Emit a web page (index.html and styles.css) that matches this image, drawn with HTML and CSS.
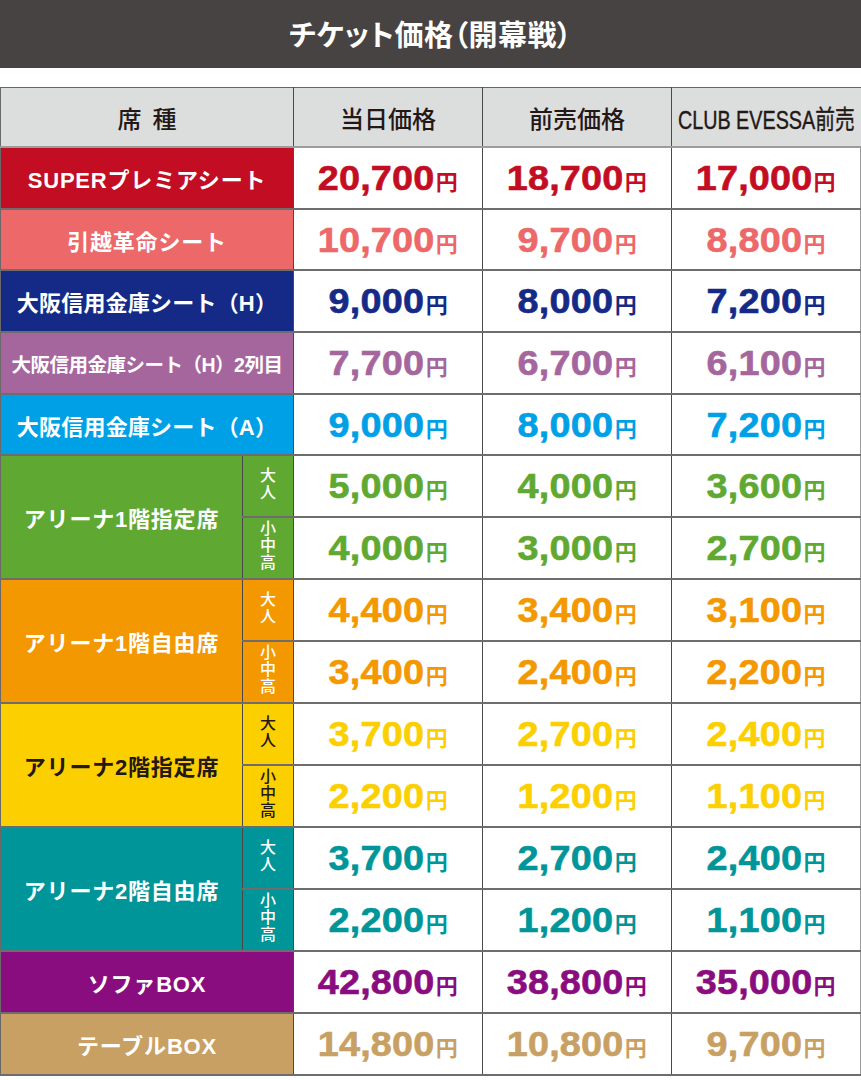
FILE: index.html
```html
<!DOCTYPE html>
<html lang="ja">
<head>
<meta charset="utf-8">
<title>チケット価格（開幕戦）</title>
<link rel="stylesheet" href="styles.css">
</head>
<body>
<div class="titlebar">チケット価格（開幕戦）</div>
<table class="prices">
  <colgroup>
    <col class="c-label"><col class="c-sub"><col class="c-p"><col class="c-p"><col class="c-p3">
  </colgroup>
  <thead>
    <tr>
      <th colspan="2">席&nbsp;&nbsp;種</th>
      <th>当日価格</th>
      <th>前売価格</th>
      <th class="club"><span>CLUB EVESSA前売</span></th>
    </tr>
  </thead>
  <tbody>
    <tr class="r-super">
      <td colspan="2" class="lbl">SUPERプレミアシート</td>
      <td class="p"><b>20,700</b><small>円</small></td><td class="p"><b>18,700</b><small>円</small></td><td class="p"><b>17,000</b><small>円</small></td>
    </tr>
    <tr class="r-hikkoshi short">
      <td colspan="2" class="lbl">引越革命シート</td>
      <td class="p"><b>10,700</b><small>円</small></td><td class="p"><b>9,700</b><small>円</small></td><td class="p"><b>8,800</b><small>円</small></td>
    </tr>
    <tr class="r-osakah">
      <td colspan="2" class="lbl tight">大阪信用金庫シート（H）</td>
      <td class="p"><b>9,000</b><small>円</small></td><td class="p"><b>8,000</b><small>円</small></td><td class="p"><b>7,200</b><small>円</small></td>
    </tr>
    <tr class="r-osakah2">
      <td colspan="2" class="lbl narrow">大阪信用金庫シート（H）2列目</td>
      <td class="p"><b>7,700</b><small>円</small></td><td class="p"><b>6,700</b><small>円</small></td><td class="p"><b>6,100</b><small>円</small></td>
    </tr>
    <tr class="r-osakaa short">
      <td colspan="2" class="lbl tight">大阪信用金庫シート（A）</td>
      <td class="p"><b>9,000</b><small>円</small></td><td class="p"><b>8,000</b><small>円</small></td><td class="p"><b>7,200</b><small>円</small></td>
    </tr>

    <tr class="r-a1s">
      <td rowspan="2" class="lbl">アリーナ1階指定席</td>
      <td class="sub"><span>大人</span></td>
      <td class="p"><b>5,000</b><small>円</small></td><td class="p"><b>4,000</b><small>円</small></td><td class="p"><b>3,600</b><small>円</small></td>
    </tr>
    <tr class="r-a1s">
      <td class="sub"><span>小中高</span></td>
      <td class="p"><b>4,000</b><small>円</small></td><td class="p"><b>3,000</b><small>円</small></td><td class="p"><b>2,700</b><small>円</small></td>
    </tr>

    <tr class="r-a1j">
      <td rowspan="2" class="lbl">アリーナ1階自由席</td>
      <td class="sub"><span>大人</span></td>
      <td class="p"><b>4,400</b><small>円</small></td><td class="p"><b>3,400</b><small>円</small></td><td class="p"><b>3,100</b><small>円</small></td>
    </tr>
    <tr class="r-a1j">
      <td class="sub"><span>小中高</span></td>
      <td class="p"><b>3,400</b><small>円</small></td><td class="p"><b>2,400</b><small>円</small></td><td class="p"><b>2,200</b><small>円</small></td>
    </tr>

    <tr class="r-a2s">
      <td rowspan="2" class="lbl">アリーナ2階指定席</td>
      <td class="sub"><span>大人</span></td>
      <td class="p"><b>3,700</b><small>円</small></td><td class="p"><b>2,700</b><small>円</small></td><td class="p"><b>2,400</b><small>円</small></td>
    </tr>
    <tr class="r-a2s">
      <td class="sub"><span>小中高</span></td>
      <td class="p"><b>2,200</b><small>円</small></td><td class="p"><b>1,200</b><small>円</small></td><td class="p"><b>1,100</b><small>円</small></td>
    </tr>

    <tr class="r-a2j">
      <td rowspan="2" class="lbl">アリーナ2階自由席</td>
      <td class="sub"><span>大人</span></td>
      <td class="p"><b>3,700</b><small>円</small></td><td class="p"><b>2,700</b><small>円</small></td><td class="p"><b>2,400</b><small>円</small></td>
    </tr>
    <tr class="r-a2j">
      <td class="sub"><span>小中高</span></td>
      <td class="p"><b>2,200</b><small>円</small></td><td class="p"><b>1,200</b><small>円</small></td><td class="p"><b>1,100</b><small>円</small></td>
    </tr>

    <tr class="r-sofa">
      <td colspan="2" class="lbl">ソファBOX</td>
      <td class="p"><b>42,800</b><small>円</small></td><td class="p"><b>38,800</b><small>円</small></td><td class="p"><b>35,000</b><small>円</small></td>
    </tr>
    <tr class="r-table">
      <td colspan="2" class="lbl">テーブルBOX</td>
      <td class="p"><b>14,800</b><small>円</small></td><td class="p"><b>10,800</b><small>円</small></td><td class="p"><b>9,700</b><small>円</small></td>
    </tr>
  </tbody>
</table>
</body>
</html>
```

FILE: styles.css
```css
html, body {
  margin: 0;
  padding: 0;
  background: #ffffff;
}

body {
  width: 861px;
  font-family: "Noto Sans CJK JP", "Noto Sans", sans-serif;
}

.titlebar {
  height: 68px;
  background: #474342;
  color: #ffffff;
  font-weight: 700;
  font-size: 29px;
  line-height: 66px;
  text-align: center;
  font-feature-settings: "palt";
  letter-spacing: 0.5px;
  margin-bottom: 19px;
}

.prices {
  width: 861px;
  border-collapse: collapse;
  table-layout: fixed;
  border-top: 1px solid #666464;
  border-left: 1px solid #6a6868;
  border-bottom: 2px solid #5a5858;
}

.c-label { width: 242px; }
.c-sub { width: 51px; }
.c-p { width: 189px; }
.c-p3 { width: 189px; }

.prices th {
  height: 58px;
  padding: 0;
  background: #dcdddd;
  color: #231815;
  font-weight: 500;
  font-size: 24px;
  border-right: 1px solid #4a4848;
  border-bottom: 2px solid #9c9c9c;
  text-align: center;
  vertical-align: middle;
}

.prices th:last-child {
  border-right: none;
}

.prices th.club span {
  display: inline-block;
  font-family: "Liberation Sans", "Noto Sans CJK JP", sans-serif;
  font-size: 26px;
  font-weight: 400;
  -webkit-text-stroke: 0.4px #231815;
  transform: scaleX(0.76);
  white-space: nowrap;
  margin: 0 -40px;
}

.prices td {
  height: 60px;
  padding: 0;
  text-align: center;
  vertical-align: middle;
  border-right: 1px solid #4a4848;
  border-bottom: 2px solid #6e6c6c;
}

.prices tr.short td {
  height: 59px;
}

.prices td:last-child {
  border-right: 2px solid #9a9a9a;
}

.lbl {
  color: #ffffff;
  font-family: "Liberation Sans", "Noto Sans CJK JP", sans-serif;
  font-weight: 700;
  font-size: 22px;
  letter-spacing: 0.8px;
  white-space: nowrap;
}

.lbl.tight {
  letter-spacing: 0.2px;
}

.lbl.narrow {
  font-size: 19.5px;
  letter-spacing: -0.5px;
}

.sub {
  color: #ffffff;
  font-size: 16px;
  font-weight: 500;
}

.sub span {
  display: inline-block;
  writing-mode: vertical-rl;
  text-orientation: upright;
  line-height: 1;
  letter-spacing: 1px;
}

.p {
  background: #ffffff;
  white-space: nowrap;
}

.p b {
  display: inline-block;
  font-family: "Liberation Sans", "Noto Sans", sans-serif;
  font-weight: 700;
  font-size: 35px;
  letter-spacing: 0.2px;
  transform: scaleX(1.08);
  margin: 0 5px 0 4px;
  -webkit-text-stroke: 0.6px currentColor;
}

.p small {
  font-family: "Noto Sans CJK JP", sans-serif;
  font-weight: 700;
  font-size: 22px;
  letter-spacing: 0;
}

/* row colours */
.r-super .lbl { background: #c30d23; }
.r-super .p { color: #c30d23; }

.r-hikkoshi .lbl { background: #ec6869; }
.r-hikkoshi .p { color: #ec6869; }

.r-osakah .lbl { background: #152a87; }
.r-osakah .p { color: #152a87; }

.r-osakah2 .lbl { background: #a5669e; }
.r-osakah2 .p { color: #a5669e; }

.r-osakaa .lbl { background: #00a0e6; }
.r-osakaa .p { color: #00a0e6; }

.r-a1s .lbl, .r-a1s .sub { background: #5fa932; }
.r-a1s .p { color: #5fa932; }

.r-a1j .lbl, .r-a1j .sub { background: #f39800; }
.r-a1j .p { color: #f39800; }

.r-a2s .lbl, .r-a2s .sub { background: #fcd000; color: #231815; }
.r-a2s .p { color: #fcd000; }

.r-a2j .lbl, .r-a2j .sub { background: #009598; }
.r-a2j .p { color: #009598; }

.r-sofa .lbl { background: #890d7e; }
.r-sofa .p { color: #890d7e; }

.r-table .lbl { background: #c8a063; }
.r-table .p { color: #c8a063; }
```
